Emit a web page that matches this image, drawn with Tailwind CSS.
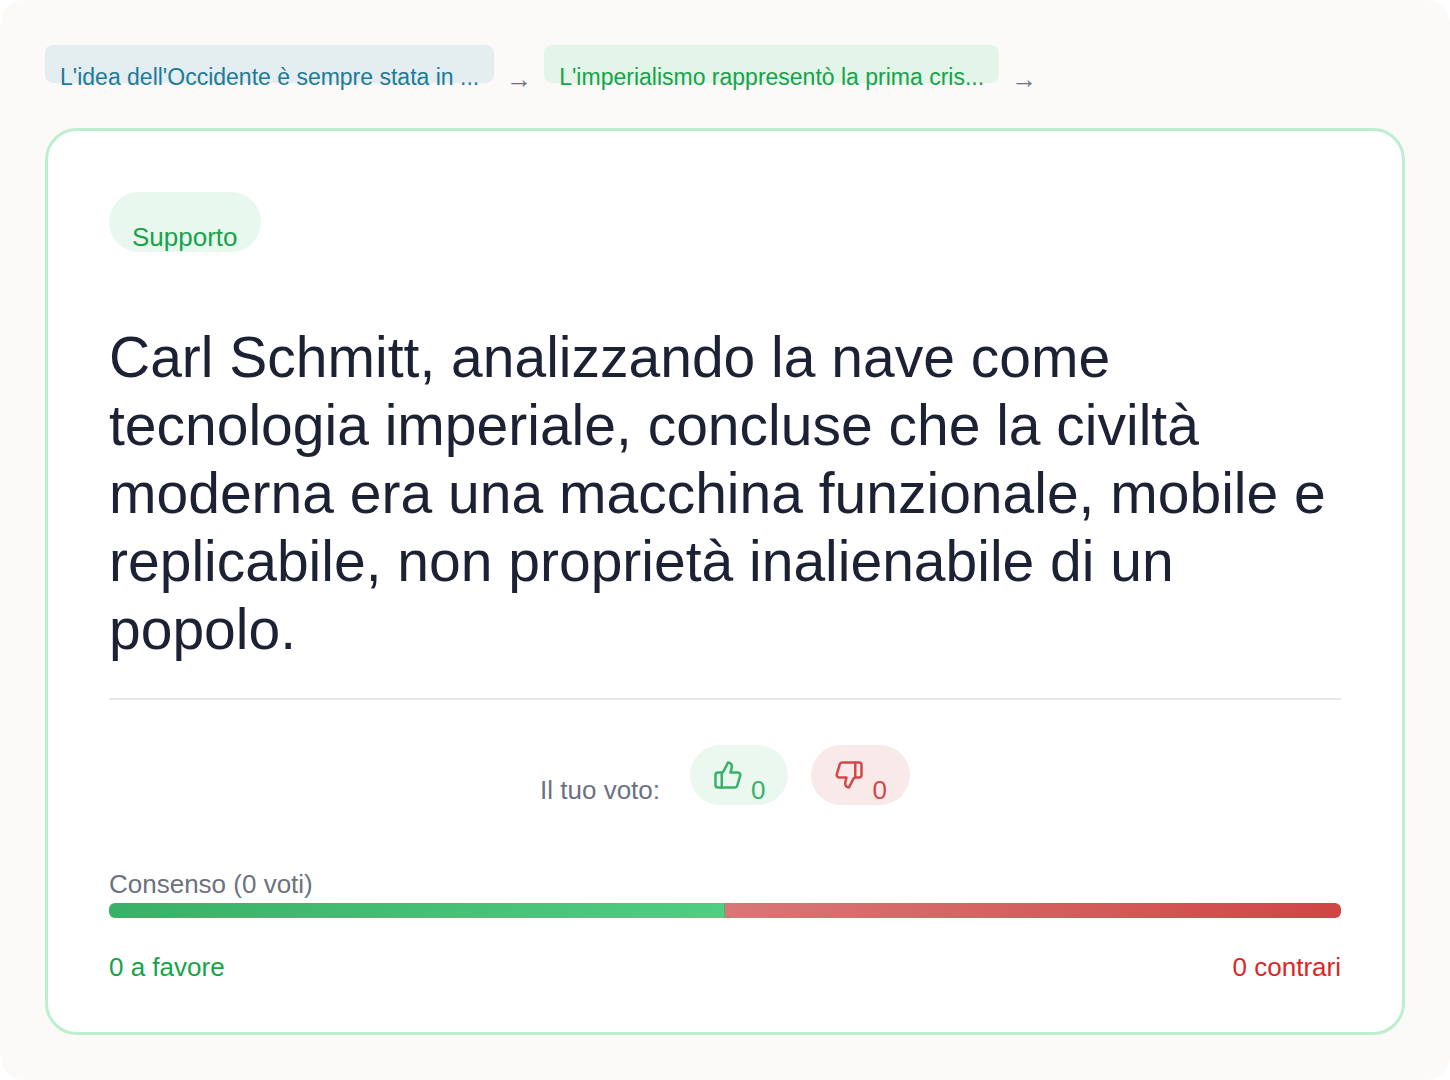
<!DOCTYPE html>
<html lang="it">
<head>
  <meta charset="UTF-8">
  <meta name="viewport" content="width=device-width, initial-scale=1.0">
  <title>Carl Schmitt - Supporto</title>
  <script src="https://cdn.jsdelivr.net/npm/@tailwindcss/browser@4"></script>
</head>
<body class="bg-white font-['Liberation_Sans',Arial,sans-serif] text-[26px] leading-[30px]">

<div class="min-h-screen rounded-3xl bg-[#fbfaf8] p-[45px]">

  <!-- Breadcrumb -->
  <nav class="h-[38px] flex items-start gap-3 text-[23px] leading-7 mb-[45px]">
    <a href="#" class="h-[38px] px-[15px] pt-[18px] rounded-lg bg-[#e4edef] text-[#217a98] whitespace-nowrap">L'idea dell'Occidente è sempre stata in ...</a>
    <span class="pt-5 text-[26px] leading-7 text-[#6b7280]">→</span>
    <a href="#" class="h-[38px] px-[15px] pt-[18px] rounded-lg bg-[#e3f5e9] text-[#16a34a] whitespace-nowrap">L'imperialismo rappresentò la prima cris...</a>
    <span class="pt-5 text-[26px] leading-7 text-[#6b7280]">→</span>
  </nav>

  <!-- Argument card -->
  <main class="bg-white border-3 border-[#bdeed0] rounded-[32px] p-[61px] pb-[50px]">
    <div class="flex">
      <span class="px-[23px] pt-[30px] rounded-full bg-[#e8f8ee] text-[#16a34a]">Supporto</span>
    </div>

    <h1 class="mt-[71px] text-[57px] leading-[68px] text-[#1c2233]">Carl Schmitt, analizzando la nave come tecnologia imperiale, concluse che la civiltà moderna era una macchina funzionale, mobile e replicabile, non proprietà inalienabile di un popolo.</h1>

    <!-- Vote buttons -->
    <div class="mt-[35px] pt-[45px] border-t-2 border-gray-200 flex items-center justify-center">
      <span class="pt-[30px] mr-[30px] text-[#6b7280]">Il tuo voto:</span>
      <button type="button" aria-label="A favore: 0" class="flex items-center gap-2 px-[23px] mr-[23px] rounded-full bg-[#eaf8f0] text-[#38b268] cursor-pointer">
        <svg class="size-[30px]" viewBox="0 0 24 24" fill="none" stroke="currentColor" stroke-width="2" stroke-linecap="round" stroke-linejoin="round">
          <path d="M7 10v12"/>
          <path d="M15 5.88 14 10h5.83a2 2 0 0 1 1.92 2.56l-2.33 8A2 2 0 0 1 17.5 22H4a2 2 0 0 1-2-2v-8a2 2 0 0 1 2-2h2.76a2 2 0 0 0 1.79-1.11L12 2a3.13 3.13 0 0 1 3 3.88Z"/>
        </svg>
        <span class="pt-[30px]">0</span>
      </button>
      <button type="button" aria-label="Contrari: 0" class="flex items-center gap-2 px-[23px] rounded-full bg-[#f9eaea] text-[#d24848] cursor-pointer">
        <svg class="size-[30px]" viewBox="0 0 24 24" fill="none" stroke="currentColor" stroke-width="2" stroke-linecap="round" stroke-linejoin="round">
          <path d="M17 14V2"/>
          <path d="M9 18.12 10 14H4.17a2 2 0 0 1-1.92-2.56l2.33-8A2 2 0 0 1 6.5 2H20a2 2 0 0 1 2 2v8a2 2 0 0 1-2 2h-2.76a2 2 0 0 0-1.79 1.11L12 22a3.13 3.13 0 0 1-3-3.88Z"/>
        </svg>
        <span class="pt-[30px]">0</span>
      </button>
    </div>

    <!-- Consensus bar -->
    <p class="mt-16 text-[#6b7280]">Consenso (0 voti)</p>
    <div class="mt-1 h-[15px] flex rounded-md overflow-hidden">
      <div class="bg-linear-135 from-[#38b068] to-[#4fce84] border-r border-[#4fae72]" style="width: 50%"></div>
      <div class="bg-linear-135 from-[#d97777] to-[#d04444]" style="width: 50%"></div>
    </div>
    <div class="mt-[34px] flex justify-between">
      <span class="text-[#16a34a]">0 a favore</span>
      <span class="text-[#dc2626]">0 contrari</span>
    </div>
  </main>

</div>

</body>
</html>
